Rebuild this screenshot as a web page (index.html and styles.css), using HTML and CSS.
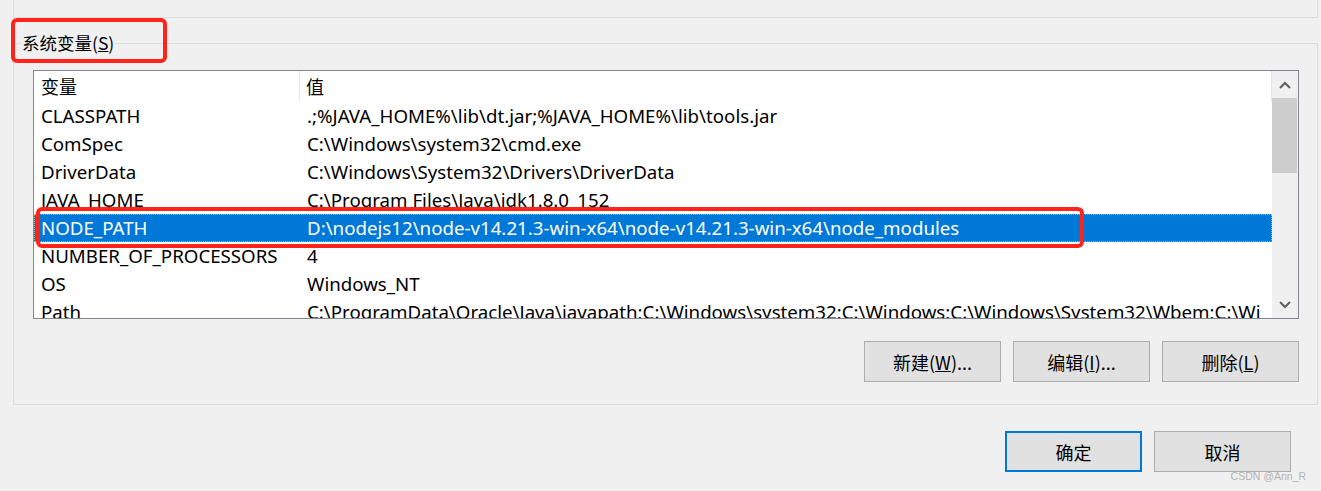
FILE: index.html
```html
<!DOCTYPE html>
<html lang="zh-CN">
<head>
    <meta charset="UTF-8">
    <title>环境变量</title>
    <link rel="stylesheet" href="styles.css">
</head>
<body>
    <div class="group-top"></div>

    <fieldset class="group">
        <legend>系统变量(<u>S</u>)</legend>
        <div class="listbox">
            <div class="list-main">
                <div class="list-head">
                    <div class="col-name">变量</div>
                    <div class="col-value">值</div>
                </div>
                <div class="list-rows">
                    <div class="row"><div class="col-name">CLASSPATH</div><div class="col-value">.;%JAVA_HOME%\lib\dt.jar;%JAVA_HOME%\lib\tools.jar</div></div>
                    <div class="row"><div class="col-name">ComSpec</div><div class="col-value">C:\Windows\system32\cmd.exe</div></div>
                    <div class="row"><div class="col-name">DriverData</div><div class="col-value">C:\Windows\System32\Drivers\DriverData</div></div>
                    <div class="row"><div class="col-name">JAVA_HOME</div><div class="col-value">C:\Program Files\Java\jdk1.8.0_152</div></div>
                    <div class="row selected"><div class="col-name">NODE_PATH</div><div class="col-value">D:\nodejs12\node-v14.21.3-win-x64\node-v14.21.3-win-x64\node_modules</div></div>
                    <div class="row"><div class="col-name">NUMBER_OF_PROCESSORS</div><div class="col-value">4</div></div>
                    <div class="row"><div class="col-name">OS</div><div class="col-value">Windows_NT</div></div>
                    <div class="row"><div class="col-name">Path</div><div class="col-value">C:\ProgramData\Oracle\Java\javapath;C:\Windows\system32;C:\Windows;C:\Windows\System32\Wbem;C:\Wi</div></div>
                </div>
            </div>
            <div class="scrollbar">
                <div class="sb-arrow">
                    <svg width="12" height="8" viewBox="0 0 12 8"><path d="M1 7 L6 2 L11 7" fill="none" stroke="#606060" stroke-width="2"/></svg>
                </div>
                <div class="sb-track"><div class="sb-thumb"></div></div>
                <div class="sb-arrow">
                    <svg width="12" height="8" viewBox="0 0 12 8"><path d="M1 1 L6 6 L11 1" fill="none" stroke="#606060" stroke-width="2"/></svg>
                </div>
            </div>
        </div>

        <div class="btn-row">
            <button class="btn">新建(<u>W</u>)...</button>
            <button class="btn">编辑(<u>I</u>)...</button>
            <button class="btn">删除(<u>L</u>)</button>
        </div>
    </fieldset>

    <div class="footer">
        <button class="btn btn-default">确定</button>
        <button class="btn">取消</button>
    </div>

    <!-- annotations drawn over the screenshot -->
    <div class="mark mark-title"></div>
    <div class="mark mark-row"></div>
    <div class="watermark">CSDN @Ann_R</div>
</body>
</html>
```

FILE: styles.css
```css
body {
    margin: 0;
    height: 491px;
    overflow: hidden;
    position: relative;
    background-color: #f0f0f0;
    font-family: "Noto Sans", "Noto Sans CJK SC", sans-serif;
    font-size: 18px;
    color: #000;
}
.group-top {
    height: 17px;
    margin: 0 3px 0 13px;
    border: 1px solid #dcdcdc;
    border-top: none;
}
.group {
    margin: 15px 3px 0 13px;
    padding: 0 0 22px 0;
    border: 1px solid #dcdcdc;
    min-width: 0;
}
.group legend {
    margin-left: 7px;
    padding: 0 1px;
    line-height: 20px;
    font-family: "Noto Sans CJK SC", sans-serif;
    font-size: 17.5px;
}
.listbox {
    display: flex;
    height: 247px;
    margin: 17px 18px 0 19px;
    border: 1px solid #828790;
    background-color: #fff;
}
.list-main {
    flex: 1;
    overflow: hidden;
}
.list-head {
    display: flex;
    height: 31px;
    line-height: 31px;
}
.list-head .col-name {
    border-right: 1px solid #e5e5e5;
    font-family: "Noto Sans CJK SC", sans-serif;
}
.list-head .col-value {
    flex: 1;
    border-right: 1px solid #e5e5e5;
    font-family: "Noto Sans CJK SC", sans-serif;
}
.col-name {
    width: 266px;
    padding-left: 7px;
    box-sizing: border-box;
    white-space: nowrap;
}
.row .col-name {
    width: 267px;
}
.col-value {
    padding-left: 6px;
    white-space: nowrap;
    overflow: hidden;
}
.row {
    display: flex;
    height: 28px;
    line-height: 28px;
    font-size: 18.7px;
}
.row.selected {
    background-color: #0078d7;
    color: #fff;
    outline: 1px dotted #f0a040;
    outline-offset: -1px;
}
.scrollbar {
    width: 26px;
    display: flex;
    flex-direction: column;
    background-color: #f0f0f0;
}
.sb-arrow {
    height: 27px;
    display: flex;
    align-items: center;
    justify-content: center;
}
.sb-track {
    flex: 1;
}
.sb-thumb {
    height: 75px;
    margin: 0 1px 0 0;
    background-color: #cdcdcd;
}
.btn-row {
    display: flex;
    justify-content: flex-end;
    gap: 12px;
    margin: 22px 18px 0 0;
}
.btn {
    width: 137px;
    height: 41px;
    box-sizing: border-box;
    border: 1px solid #adadad;
    background-color: #e1e1e1;
    font-family: "Noto Sans CJK SC", sans-serif;
    font-size: 18px;
    color: #000;
    padding: 0;
}
.btn-default {
    border: 2px solid #0078d7;
}
.footer {
    display: flex;
    justify-content: flex-end;
    gap: 12px;
    margin-top: 26px;
    padding-right: 30px;
}
.mark {
    position: absolute;
    box-sizing: border-box;
    border: 4px solid #ff2419;
    border-radius: 6px;
}
.mark-title {
    left: 11px;
    top: 18px;
    width: 156px;
    height: 45px;
}
.mark-row {
    left: 36px;
    top: 207px;
    width: 1048px;
    height: 41px;
}
.watermark {
    position: absolute;
    right: 15px;
    top: 470px;
    font-family: "Liberation Sans", sans-serif;
    font-size: 10.5px;
    color: #b4b4b4;
}
```
